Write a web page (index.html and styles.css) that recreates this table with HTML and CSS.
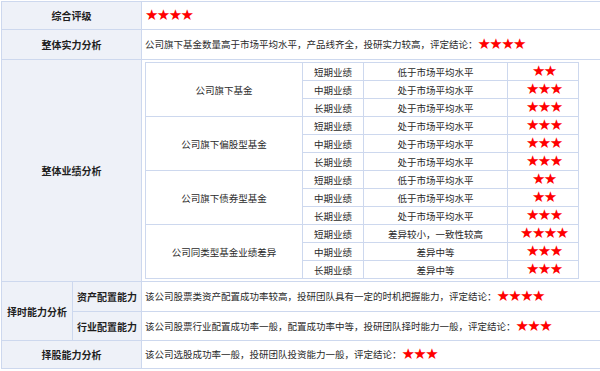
FILE: index.html
```html
<!DOCTYPE html>
<html lang="zh">
<head>
<meta charset="utf-8">
<link rel="stylesheet" href="styles.css">
</head>
<body>
<table class="rating">
  <colgroup><col class="c1"><col class="c2"><col class="c3"></colgroup>
  <tr class="r1">
    <th colspan="2">综合评级</th>
    <td class="txt"><span class="stars">★★★★</span></td>
  </tr>
  <tr class="r2">
    <th colspan="2">整体实力分析</th>
    <td class="txt">公司旗下基金数量高于市场平均水平，产品线齐全，投研实力较高，评定结论：<span class="stars">★★★★</span></td>
  </tr>
  <tr>
    <th colspan="2">整体业绩分析</th>
    <td class="holder">
      <table class="perf">
        <colgroup><col class="p1"><col class="p2"><col class="p3"><col class="p4"></colgroup>
        <tr><td rowspan="3">公司旗下基金</td><td>短期业绩</td><td>低于市场平均水平</td><td><span class="stars">★★</span></td></tr>
        <tr><td>中期业绩</td><td>处于市场平均水平</td><td><span class="stars">★★★</span></td></tr>
        <tr><td>长期业绩</td><td>处于市场平均水平</td><td><span class="stars">★★★</span></td></tr>
        <tr><td rowspan="3">公司旗下偏股型基金</td><td>短期业绩</td><td>处于市场平均水平</td><td><span class="stars">★★★</span></td></tr>
        <tr><td>中期业绩</td><td>处于市场平均水平</td><td><span class="stars">★★★</span></td></tr>
        <tr><td>长期业绩</td><td>处于市场平均水平</td><td><span class="stars">★★★</span></td></tr>
        <tr><td rowspan="3">公司旗下债券型基金</td><td>短期业绩</td><td>低于市场平均水平</td><td><span class="stars">★★</span></td></tr>
        <tr><td>中期业绩</td><td>低于市场平均水平</td><td><span class="stars">★★</span></td></tr>
        <tr><td>长期业绩</td><td>处于市场平均水平</td><td><span class="stars">★★★</span></td></tr>
        <tr><td rowspan="3">公司同类型基金业绩差异</td><td>短期业绩</td><td>差异较小，一致性较高</td><td><span class="stars">★★★★</span></td></tr>
        <tr><td>中期业绩</td><td>差异中等</td><td><span class="stars">★★★</span></td></tr>
        <tr><td>长期业绩</td><td>差异中等</td><td><span class="stars">★★★</span></td></tr>
      </table>
    </td>
  </tr>
  <tr class="r4">
    <th rowspan="2">择时能力分析</th>
    <th class="sub">资产配置能力</th>
    <td class="txt">该公司股票类资产配置成功率较高，投研团队具有一定的时机把握能力，评定结论：<span class="stars">★★★★</span></td>
  </tr>
  <tr class="r5">
    <th class="sub">行业配置能力</th>
    <td class="txt">该公司股票行业配置成功率一般，配置成功率中等，投研团队择时能力一般，评定结论：<span class="stars">★★★</span></td>
  </tr>
  <tr class="r6">
    <th colspan="2">择股能力分析</th>
    <td class="txt">该公司选股成功率一般，投研团队投资能力一般，评定结论：<span class="stars">★★★</span></td>
  </tr>
</table>
</body>
</html>
```
FILE: styles.css
```css
html, body {
  margin: 0;
  padding: 0;
  background: #ffffff;
}
body {
  padding: 1px 0 0 1px;
  font-family: "Noto Sans CJK SC", "Noto Sans", sans-serif;
  font-size: 9.5px;
  color: #2a2a2a;
}
.rating {
  border-collapse: collapse;
  table-layout: fixed;
  width: 600px;
}
.rating .c1 { width: 71px; }
.rating .c2 { width: 69px; }
.rating .c3 { width: 460px; }
.rating > tbody > tr > th,
.rating > tbody > tr > td {
  border: 1px solid #cdd8ee;
  padding: 0;
}
.rating > tbody > tr > th {
  background: #eef1f8;
  font-weight: bold;
  font-size: 10px;
  color: #1e1e1e;
  text-align: center;
  vertical-align: middle;
}
.rating .r1 { height: 28px; }
.rating .r2 { height: 30px; }
.rating .r4 { height: 30px; }
.rating .r5 { height: 29px; }
.rating .r6 { height: 28px; }
.rating td.txt {
  padding-left: 3px;
  vertical-align: middle;
  white-space: nowrap;
}
.rating td.holder {
  padding: 2px 0 2px 3px;
  vertical-align: top;
}
.stars {
  font-family: "DejaVu Sans", sans-serif;
  font-size: 15px;
  letter-spacing: -1.6px;
  color: #ff0000;
  line-height: 1;
  vertical-align: -1px;
}
.perf {
  border-collapse: collapse;
  table-layout: fixed;
  width: 433px;
}
.perf .p1 { width: 157px; }
.perf .p2 { width: 61px; }
.perf .p3 { width: 144px; }
.perf .p4 { width: 71px; }
.perf td {
  border: 1px solid #cdd8ee;
  padding: 0;
  height: 17px;
  text-align: center;
  vertical-align: middle;
  white-space: nowrap;
}
.perf td .stars {
  margin-right: -1.6px;
}
```
